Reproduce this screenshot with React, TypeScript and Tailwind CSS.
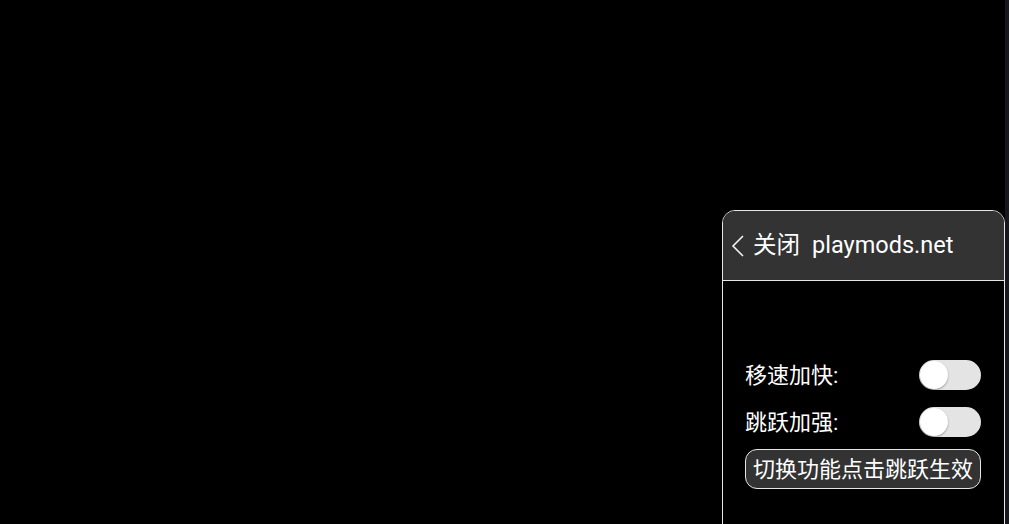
import React from 'react';

const font = { fontFamily: 'Roboto, "Noto Sans CJK SC", sans-serif' };

function Toggle() {
  return (
    <div className="relative h-[30px] w-[62px] rounded-full bg-[#e4e4e4]">
      <div className="absolute left-[1px] top-[1px] h-[28px] w-[28px] rounded-full bg-white shadow-[0_1px_2px_rgba(0,0,0,0.35)]" />
    </div>
  );
}

export default function App() {
  return (
    <div className="flex h-[524px] w-full overflow-hidden bg-black text-white" style={font}>
      <div className="flex-1" />

      {/* floating mod menu */}
      <div className="mt-[210px] flex h-[330px] w-[283px] flex-col overflow-hidden rounded-t-[13px] border-[1.5px] border-[#e6e6e6] bg-black">
        <div className="flex h-[70px] items-center border-b-[1.5px] border-[#e6e6e6] bg-[#333333] pl-[8px] text-[23.5px]">
          <svg width="14" height="22" viewBox="0 0 14 22" className="mr-[8px]">
            <polyline points="12,1 2,11 12,21" fill="none" stroke="#f2f2f2" strokeWidth="1.6" />
          </svg>
          <span>关闭</span>
          <span className="ml-[12px]">playmods.net</span>
        </div>

        <div className="flex flex-col pl-[22px] pr-[23px] pt-[79px] text-[22px]">
          <div className="flex h-[30px] items-center justify-between">
            <span>移速加快:</span>
            <Toggle />
          </div>
          <div className="mt-[17px] flex h-[30px] items-center justify-between">
            <span>跳跃加强:</span>
            <Toggle />
          </div>
          <button className="mt-[12px] flex h-[40px] w-[236px] items-center justify-center rounded-[12px] border-[1.5px] border-[#e6e6e6] bg-[#333333] text-[22px] text-white">
            切换功能点击跳跃生效
          </button>
        </div>
      </div>

      <div className="w-[4px] bg-[#17181d]" />
    </div>
  );
}
